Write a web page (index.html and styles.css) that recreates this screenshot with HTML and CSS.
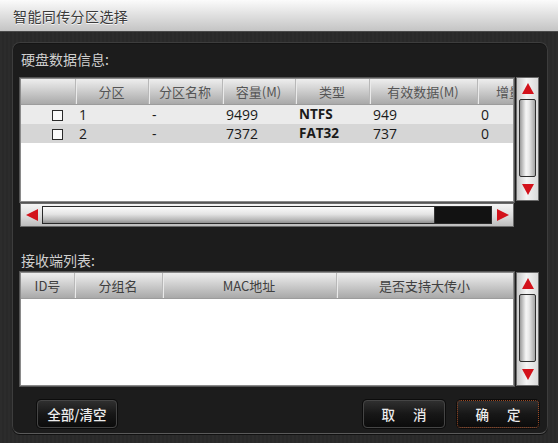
FILE: index.html
```html
<!DOCTYPE html>
<html lang="zh-CN">
<head>
  <meta charset="UTF-8" />
  <title>智能同传分区选择</title>
  <link rel="stylesheet" href="styles.css">
</head>
<body>
  <div class="dialog">
    <header class="titlebar">智能同传分区选择</header>

    <div class="dialog-body">
      <div class="panel">
        <div class="section-label">硬盘数据信息:</div>

        <div class="list-row list-row-disk">
          <div class="grid-box">
            <table class="grid grid-disk">
              <colgroup>
                <col style="width:54px"><col style="width:73px"><col style="width:74px">
                <col style="width:73px"><col style="width:74px"><col style="width:108px"><col style="width:60px">
              </colgroup>
              <thead>
                <tr>
                  <th></th><th>分区</th><th>分区名称</th><th>容量(M)</th><th>类型</th><th>有效数据(M)</th><th class="cut">增量</th>
                </tr>
              </thead>
              <tbody>
                <tr class="row-a">
                  <td class="chk"><span class="checkbox"></span></td>
                  <td>1</td><td>-</td><td>9499</td><td class="fs">NTFS</td><td>949</td><td>0</td>
                </tr>
                <tr class="row-b">
                  <td class="chk"><span class="checkbox"></span></td>
                  <td>2</td><td>-</td><td>7372</td><td class="fs">FAT32</td><td>737</td><td>0</td>
                </tr>
              </tbody>
            </table>
          </div>
          <div class="vscroll">
            <div class="arrow-box"><span class="tri tri-up"></span></div>
            <div class="thumb-v"></div>
            <div class="arrow-box arrow-box-down"><span class="tri tri-down"></span></div>
          </div>
        </div>

        <div class="hscroll">
          <div class="arrow-box-h"><span class="tri tri-left"></span></div>
          <div class="track-h"><div class="thumb-h"></div></div>
          <div class="arrow-box-h"><span class="tri tri-right"></span></div>
        </div>

        <div class="section-label section-label-2">接收端列表:</div>

        <div class="list-row list-row-recv">
          <div class="grid-box">
            <table class="grid grid-recv">
              <colgroup>
                <col style="width:53px"><col style="width:88px"><col style="width:174px"><col>
              </colgroup>
              <thead>
                <tr>
                  <th>ID号</th><th>分组名</th><th>MAC地址</th><th>是否支持大传小</th>
                </tr>
              </thead>
              <tbody></tbody>
            </table>
          </div>
          <div class="vscroll">
            <div class="arrow-box"><span class="tri tri-up"></span></div>
            <div class="thumb-v"></div>
            <div class="arrow-box arrow-box-down"><span class="tri tri-down"></span></div>
          </div>
        </div>

        <div class="footer">
          <button class="btn btn-all">全部/清空</button>
          <div class="footer-right">
            <button class="btn btn-pair"><span>取</span><span>消</span></button>
            <button class="btn btn-pair btn-default"><span>确</span><span>定</span></button>
          </div>
        </div>
      </div>
    </div>
  </div>
</body>
</html>
```

FILE: styles.css
```css
:root {
  --red-arrow: #d3121b;
  --label: #cfcfcf;
  --head-text: #555555;
  --cell-text: #1a1a1a;
  --panel-bg: #1c1c1c;
  --body-bg: #2b2b2b;
}
* { box-sizing: border-box; margin: 0; padding: 0; }
body {
  width: 558px; height: 443px; overflow: hidden;
  background: #ffffff;
  font-family: "Noto Sans CJK SC", "Open Sans", sans-serif;
}
.dialog {
  width: 558px; height: 443px;
  display: flex; flex-direction: column;
}
.titlebar {
  height: 32px; padding-left: 13px; padding-top: 1px;
  background: linear-gradient(180deg, #fbfbfb 0%, #e2e2e2 45%, #c4c4c4 100%);
  border-bottom: 1px solid #4a4a4a;
  color: #3a3a3a; font-size: 14px; letter-spacing: 0.4px; line-height: 31px;
  text-shadow: 0 1px 0 rgba(255, 255, 255, 0.8);
}
.dialog-body {
  flex: 1;
  background: repeating-linear-gradient(90deg, #2c2c2c 0 2px, #292929 2px 4px);
  padding: 10px 10px 9px 12px;
}
.panel {
  height: 100%;
  background: var(--panel-bg);
  border: 1px solid #3d3d3d; border-bottom-color: #5a5a5a;
  border-radius: 8px;
  box-shadow: inset 0 1px 0 #151515, 0 1px 0 #111;
  padding: 0 8px 0 7px;
  display: flex; flex-direction: column;
}
.section-label {
  height: 20px; margin-top: 6px; margin-bottom: 8px;
  color: var(--label); font-size: 14px; line-height: 20px; padding-left: 1px;
}
.section-label-2 { margin-top: 23px; margin-bottom: 2px; }

/* list + vertical scrollbar */
.list-row {
  display: flex; gap: 2px;
}
.list-row-disk { height: 124px; }
.list-row-disk .grid-box { margin-top: 1px; }
.list-row-recv { height: 114px; }
.grid-box {
  width: 494px; height: 100%;
  background: #ffffff;
  border: 1px solid #8a8a8a;
  box-shadow: 0 0 0 1px #555;
  overflow: hidden;
}
.grid {
  border-collapse: collapse; table-layout: fixed;
}
.grid-disk { width: 516px; }
.grid-recv { width: 492px; }
.grid th {
  height: 25px; padding: 0;
  background: linear-gradient(180deg, #eeeeee 0%, #d6d6d6 35%, #a9a9a9 100%);
  border-bottom: 1px solid #9c9c9c;
  color: var(--head-text); font-weight: 400; font-size: 13px;
  text-align: center; white-space: nowrap; overflow: hidden;
  position: relative;
}
.grid th + th {
  box-shadow: inset 1px 0 0 #b8b8b8, inset 2px 0 0 #eaeaea;
}
.grid-recv th { color: #404040; }
.grid th.cut { text-align: left; padding-left: 19px; }
.grid td {
  height: 19px; padding: 0 0 0 4px;
  color: var(--cell-text); font-family: "Open Sans", "Noto Sans CJK SC", sans-serif;
  font-size: 14px; line-height: 19px; white-space: nowrap;
}
.grid td.fs { font-weight: 700; font-size: 13.5px; }
.row-a td { background: #ebebeb; }
.row-b td { background: #d6d6d6; }
.grid td.chk { text-align: right; padding: 0 12px 0 0; }
.checkbox {
  display: inline-block; width: 11px; height: 11px;
  border: 1.5px solid #2a2a2a; background: #fafafa;
  vertical-align: -1px;
}

.vscroll {
  width: 23px; height: 100%;
  border: 1px solid #6a6a6a;
  background: linear-gradient(90deg, #c9c9c9 0%, #f4f4f4 45%, #dadada 100%);
  display: flex; flex-direction: column;
}
.arrow-box {
  height: 20px; display: flex; align-items: center; justify-content: center;
}
.arrow-box-down { height: 22px; }
.thumb-v {
  flex: 1; margin: 1px 2px;
  border: 1px solid #2e2e2e; border-radius: 2px;
  background: linear-gradient(90deg, #9a9a9a 0%, #f6f6f6 40%, #e9e9e9 60%, #a3a3a3 100%);
}
.tri { display: block; width: 0; height: 0; }
.tri-up {
  border-left: 6px solid transparent; border-right: 6px solid transparent;
  border-bottom: 11px solid var(--red-arrow);
}
.tri-down {
  border-left: 6px solid transparent; border-right: 6px solid transparent;
  border-top: 11px solid var(--red-arrow);
}
.tri-left {
  border-top: 6px solid transparent; border-bottom: 6px solid transparent;
  border-right: 12px solid var(--red-arrow);
}
.tri-right {
  border-top: 6px solid transparent; border-bottom: 6px solid transparent;
  border-left: 12px solid var(--red-arrow);
}

/* horizontal scrollbar */
.hscroll {
  width: 494px; height: 24px; margin-top: 2px;
  border: 1px solid #6a6a6a;
  background: linear-gradient(180deg, #f5f5f5 0%, #dcdcdc 55%, #bdbdbd 100%);
  display: flex; align-items: center;
}
.arrow-box-h {
  width: 21px; height: 100%;
  display: flex; align-items: center; justify-content: center;
}
.track-h {
  flex: 1; height: 18px;
  background: #121212; border: 1px solid #2a2a2a;
}
.thumb-h {
  width: 392px; height: 100%;
  border-right: 1px solid #333;
  background: linear-gradient(180deg, #fbfbfb 0%, #e4e4e4 45%, #b7b7b7 80%, #8e8e8e 100%);
}

/* footer buttons */
.footer {
  margin-top: 14px; height: 28px;
  display: flex; justify-content: space-between; align-items: center;
}
.footer-right { display: flex; gap: 12px; }
.btn {
  height: 28px;
  background: linear-gradient(180deg, #2f2f2f 0%, #171717 50%, #0b0b0b 100%);
  border: 1px solid #454545; border-radius: 4px;
  box-shadow: 0 0 0 1px #0c0c0c;
  color: #ececec; font-family: "Noto Sans CJK SC", sans-serif;
  font-size: 13.5px; font-weight: 500;
  display: flex; align-items: center; justify-content: center;
}
.btn-all { width: 80px; margin-left: 17px; }
.btn-pair { width: 82px; gap: 18px; }
.btn-default { border: 1px dotted #9b4a25; }
```
